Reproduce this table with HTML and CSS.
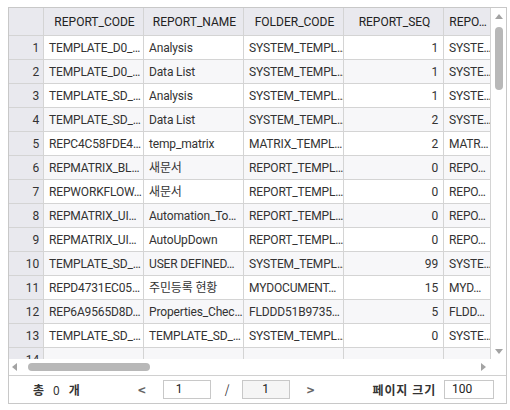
FILE: index.html
```html
<!DOCTYPE html>
<html lang="ko">
<head>
<meta charset="utf-8">
<title>Report grid</title>
<link rel="stylesheet" href="styles.css">
</head>
<body>
<div class="grid">
  <div class="main">
    <div class="viewport">
      <div class="row head">
        <div class="cell num"></div>
        <div class="cell">REPORT_CODE</div>
        <div class="cell">REPORT_NAME</div>
        <div class="cell">FOLDER_CODE</div>
        <div class="cell">REPORT_SEQ</div>
        <div class="cell">REPO…</div>
      </div>
      <div class="row"><div class="cell num">1</div><div class="cell">TEMPLATE_D0_…</div><div class="cell">Analysis</div><div class="cell">SYSTEM_TEMPL…</div><div class="cell r">1</div><div class="cell">SYSTE…</div></div>
      <div class="row alt"><div class="cell num">2</div><div class="cell">TEMPLATE_D0_…</div><div class="cell">Data List</div><div class="cell">SYSTEM_TEMPL…</div><div class="cell r">1</div><div class="cell">SYSTE…</div></div>
      <div class="row"><div class="cell num">3</div><div class="cell">TEMPLATE_SD_…</div><div class="cell">Analysis</div><div class="cell">SYSTEM_TEMPL…</div><div class="cell r">1</div><div class="cell">SYSTE…</div></div>
      <div class="row alt"><div class="cell num">4</div><div class="cell">TEMPLATE_SD_…</div><div class="cell">Data List</div><div class="cell">SYSTEM_TEMPL…</div><div class="cell r">2</div><div class="cell">SYSTE…</div></div>
      <div class="row"><div class="cell num">5</div><div class="cell">REPC4C58FDE4…</div><div class="cell">temp_matrix</div><div class="cell">MATRIX_TEMPL…</div><div class="cell r">2</div><div class="cell">MATR…</div></div>
      <div class="row alt"><div class="cell num">6</div><div class="cell">REPMATRIX_BL…</div><div class="cell">새문서</div><div class="cell">REPORT_TEMPL…</div><div class="cell r">0</div><div class="cell">REPO…</div></div>
      <div class="row"><div class="cell num">7</div><div class="cell">REPWORKFLOW…</div><div class="cell">새문서</div><div class="cell">REPORT_TEMPL…</div><div class="cell r">0</div><div class="cell">REPO…</div></div>
      <div class="row alt"><div class="cell num">8</div><div class="cell">REPMATRIX_UI…</div><div class="cell">Automation_To…</div><div class="cell">REPORT_TEMPL…</div><div class="cell r">0</div><div class="cell">REPO…</div></div>
      <div class="row"><div class="cell num">9</div><div class="cell">REPMATRIX_UI…</div><div class="cell">AutoUpDown</div><div class="cell">REPORT_TEMPL…</div><div class="cell r">0</div><div class="cell">REPO…</div></div>
      <div class="row alt"><div class="cell num">10</div><div class="cell">TEMPLATE_SD_…</div><div class="cell">USER DEFINED…</div><div class="cell">SYSTEM_TEMPL…</div><div class="cell r">99</div><div class="cell">SYSTE…</div></div>
      <div class="row"><div class="cell num">11</div><div class="cell">REPD4731EC05…</div><div class="cell">주민등록 현황</div><div class="cell">MYDOCUMENT…</div><div class="cell r">15</div><div class="cell">MYD…</div></div>
      <div class="row alt"><div class="cell num">12</div><div class="cell">REP6A9565D8D…</div><div class="cell">Properties_Chec…</div><div class="cell">FLDDD51B9735…</div><div class="cell r">5</div><div class="cell">FLDD…</div></div>
      <div class="row"><div class="cell num">13</div><div class="cell">TEMPLATE_SD_…</div><div class="cell">TEMPLATE_SD_…</div><div class="cell">SYSTEM_TEMPL…</div><div class="cell r">0</div><div class="cell">SYSTE…</div></div>
      <div class="row alt"><div class="cell num">14</div><div class="cell"></div><div class="cell"></div><div class="cell"></div><div class="cell r"></div><div class="cell"></div></div>
    </div>
    <div class="vscroll">
      <span class="arrow up"></span>
      <span class="vthumb"></span>
      <span class="spacer"></span>
      <span class="arrow down"></span>
    </div>
    <div class="hscroll">
      <span class="arrow left"></span>
      <span class="hthumb"></span>
      <span class="spacer"></span>
      <span class="arrow right"></span>
    </div>
    <div class="corner"></div>
  </div>
  <div class="footer">
    <div class="total"><span class="lbl">총</span><span class="cnt">0</span><span class="lbl">개</span></div>
    <div class="pager">
      <span class="nav">&lt;</span>
      <span class="box cur">1</span>
      <span class="slash">/</span>
      <span class="box all">1</span>
      <span class="nav">&gt;</span>
    </div>
    <div class="size"><span class="lbl wide">페이지 크기</span><span class="box ps">100</span></div>
  </div>
</div>
</body>
</html>
```
FILE: styles.css
```css
body {
  margin: 0;
  background: #fff;
  font-family: Roboto, "Noto Sans CJK KR", sans-serif;
  font-size: 12px;
  color: #333;
}
.grid {
  margin: 7px 0 0 8px;
  width: 499px;
  height: 397px;
  box-sizing: border-box;
  border: 1px solid #c8c8c8;
  display: flex;
  flex-direction: column;
}
.main {
  display: grid;
  grid-template-columns: 482px 15px;
  grid-template-rows: 351px 16px;
  border-bottom: 1px solid #d0d0d0;
}
.viewport {
  overflow: hidden;
}
.row {
  display: grid;
  grid-template-columns: 35px 100px 100px 100px 100px 47px;
  height: 24px;
}
.row.alt .cell {
  background: #f7f7f9;
}
.cell {
  box-sizing: border-box;
  border-right: 1px solid #d4d4d4;
  border-bottom: 1px solid #d4d4d4;
  padding: 1px 3px 0 5px;
  line-height: 22px;
  white-space: nowrap;
  overflow: hidden;
  letter-spacing: -0.15px;
}
.cell.r {
  text-align: right;
  padding-right: 5px;
}
.row .cell.num {
  background: #e9e9ee;
  text-align: right;
  padding-right: 4px;
}
.row.head {
  height: 28px;
}
.head .cell {
  line-height: 26px;
  text-align: center;
  background: #e9e9ee;
  color: #222;
  letter-spacing: 0;
}
.vscroll {
  display: flex;
  flex-direction: column;
  align-items: center;
  padding: 6px 0 5px;
}
.hscroll {
  display: flex;
  align-items: center;
  padding: 0 5px 0 3px;
}
.spacer {
  flex: 1;
}
.arrow {
  width: 0;
  height: 0;
  border: 4px solid transparent;
}
.arrow.up {
  border-top-width: 0;
  border-bottom: 5px solid #a3a3a3;
}
.arrow.down {
  border-bottom-width: 0;
  border-top: 5px solid #a3a3a3;
}
.arrow.left {
  border-left-width: 0;
  border-right: 5px solid #a3a3a3;
}
.arrow.right {
  border-right-width: 0;
  border-left: 5px solid #a3a3a3;
}
.vthumb {
  margin-top: 8px;
  width: 8px;
  height: 63px;
  border-radius: 4px;
  background: #b8b8b8;
}
.hthumb {
  margin-left: 11px;
  width: 122px;
  height: 8px;
  border-radius: 4px;
  background: #b8b8b8;
}
.footer {
  flex: 1;
  display: flex;
  align-items: center;
  justify-content: space-between;
  padding: 0 12px 0 24px;
  font-family: "Noto Sans CJK KR", sans-serif;
}
.total {
  display: flex;
  gap: 9px;
  color: #333;
}
.lbl {
  font-weight: bold;
}
.lbl.wide {
  letter-spacing: 0.8px;
}
.pager {
  display: flex;
  align-items: center;
}
.nav {
  color: #666;
  width: 18px;
  text-align: center;
  font-size: 13px;
  font-weight: bold;
}
.slash {
  margin: 0 12px 0 14px;
  color: #333;
}
.box {
  box-sizing: border-box;
  width: 48px;
  height: 19px;
  line-height: 17px;
  border: 1px solid #c8c8c8;
  color: #222;
  font-family: Roboto, sans-serif;
}
.box.cur {
  margin-left: 12px;
  padding-left: 12px;
}
.box.all {
  background: #f5f5f5;
  text-align: center;
  margin-right: 12px;
}
.size {
  display: flex;
  align-items: center;
  gap: 8px;
}
.box.ps {
  width: 50px;
  padding-left: 7px;
}
```
